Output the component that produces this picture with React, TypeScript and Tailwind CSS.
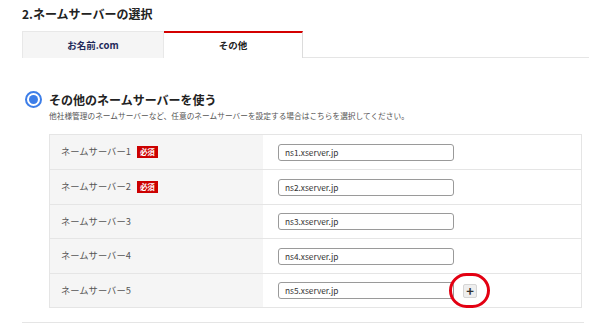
const rows = [
  { label: 'ネームサーバー1', required: true, value: 'ns1.xserver.jp', h: 'h-[34px]' },
  { label: 'ネームサーバー2', required: true, value: 'ns2.xserver.jp', h: 'h-[35px]' },
  { label: 'ネームサーバー3', required: false, value: 'ns3.xserver.jp', h: 'h-[34px]' },
  { label: 'ネームサーバー4', required: false, value: 'ns4.xserver.jp', h: 'h-[35px]' },
  { label: 'ネームサーバー5', required: false, value: 'ns5.xserver.jp', h: 'h-[34px]', add: true },
];

export default function App() {
  return (
    <div
      className="w-[600px] h-[323px] overflow-hidden bg-white pl-[22px] pr-[11px] text-[#333]"
      style={{ fontFamily: '"Noto Sans CJK JP", "Noto Sans", sans-serif' }}
    >
      {/* Heading */}
      <h2 className="pt-[5px] h-[31px] text-[12px] leading-[18px] font-bold text-[#222]">2.ネームサーバーの選択</h2>

      {/* Tabs */}
      <div className="flex h-[27px]">
        <div className="w-[142px] flex items-center justify-center bg-[#f5f5f5] border border-[#e8e8e8] border-b-0 text-[9.5px] font-bold text-[#1f2a5a]">
          お名前.com
        </div>
        <div className="w-[139px] flex items-center justify-center bg-white border-t-2 border-t-[#d40000] border-r border-r-[#dcdcdc] text-[9.5px] font-bold text-[#222]">
          その他
        </div>
        <div className="flex-1 border-b border-[#e5e5e5]" />
      </div>

      {/* Radio option */}
      <div className="mt-[33px] flex items-center gap-[7px] pl-[3px] h-[17px]">
        <span className="w-[17px] h-[17px] rounded-full border-2 border-[#3d7ee8] flex items-center justify-center">
          <span className="w-[9px] h-[9px] rounded-full bg-[#3d7ee8]" />
        </span>
        <span className="text-[12px] leading-[17px] font-bold text-[#222]">その他のネームサーバーを使う</span>
      </div>
      <p className="pl-[27px] mt-[2px] text-[7.7px] leading-[12px] text-[#555]">
        他社様管理のネームサーバーなど、任意のネームサーバーを設定する場合はこちらを選択してください。
      </p>

      {/* Table */}
      <div className="ml-[27px] mr-[7px] mt-[12px] border border-[#e5e5e5]">
        {rows.map((r, i) => (
          <div key={i} className={`flex ${r.h} ${i > 0 ? 'border-t border-[#e5e5e5]' : ''}`}>
            <div className="w-[213px] bg-[#f5f5f5] flex items-center gap-[6px] pl-[11px] text-[9.3px] text-[#555]">
              <span>{r.label}</span>
              {r.required && (
                <span className="w-[21px] h-[12px] flex items-center justify-center bg-[#cc0000] text-white text-[7.5px] font-bold">必須</span>
              )}
            </div>
            <div className="flex-1 flex items-center pl-[15px]">
              <div className="w-[176px] h-[17px] border border-[#9a9a9a] rounded-[3px] flex items-center pl-[6px] text-[8.3px] text-[#333]">
                {r.value}
              </div>
              {r.add && (
                <div className="relative ml-[9px]">
                  <span className="w-[14px] h-[14px] flex items-center justify-center bg-[#eeeeee] border border-[#d5d5d5] rounded-[2px] text-[13px] leading-none font-bold text-[#333]">
                    +
                  </span>
                  <span className="absolute left-[-14px] top-[-11px] w-[41px] h-[35px] rounded-full border-[3px] border-[#e30012]" />
                </div>
              )}
            </div>
          </div>
        ))}
      </div>

      <div className="mt-[14px] mr-[5px] border-t border-[#e5e5e5]" />
    </div>
  );
}
